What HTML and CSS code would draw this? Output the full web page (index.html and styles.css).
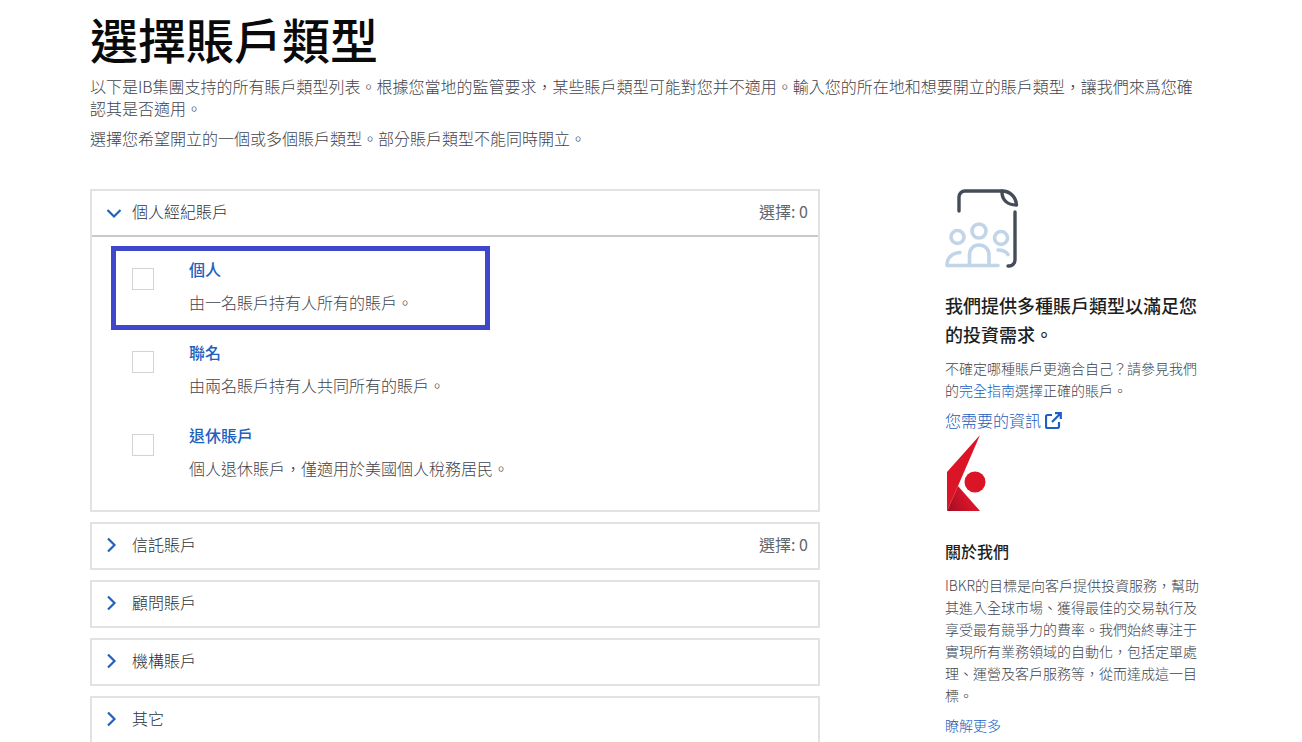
FILE: index.html
```html
<!DOCTYPE html>
<html lang="zh-Hant">
<head>
<meta charset="utf-8">
<title>選擇賬戶類型</title>
<link rel="stylesheet" href="styles.css">
</head>
<body>
<main class="page">
  <h1 class="title">選擇賬戶類型</h1>
  <p class="intro">以下是IB集團支持的所有賬戶類型列表。根據您當地的監管要求，某些賬戶類型可能對您并不適用。輸入您的所在地和想要開立的賬戶類型，讓我們來爲您確認其是否適用。</p>
  <p class="intro intro-second">選擇您希望開立的一個或多個賬戶類型。部分賬戶類型不能同時開立。</p>
  <div class="columns">
    <section class="accordion">
      <div class="panel">
        <div class="panel-head open">
          <svg class="chev" width="16" height="16" viewBox="0 0 16 16"><path d="M1.500 6 8 12.500 14.500 6" fill="none" stroke="#2460bd" stroke-width="2.200"/></svg>
          <span class="panel-name">個人經紀賬戶</span>
          <span class="count">選擇: 0</span>
        </div>
        <div class="options">
          <div class="option focus">
            <span class="check"></span>
            <div class="option-text"><a class="option-title">個人</a><div class="option-desc">由一名賬戶持有人所有的賬戶。</div></div>
          </div>
          <div class="option">
            <span class="check"></span>
            <div class="option-text"><a class="option-title">聯名</a><div class="option-desc">由兩名賬戶持有人共同所有的賬戶。</div></div>
          </div>
          <div class="option">
            <span class="check"></span>
            <div class="option-text"><a class="option-title">退休賬戶</a><div class="option-desc">個人退休賬戶，僅適用於美國個人稅務居民。</div></div>
          </div>
        </div>
      </div>
      <div class="panel">
        <div class="panel-head">
          <svg class="chev" width="16" height="16" viewBox="0 0 16 16"><path d="M2 1.500 8.500 8 2 14.500" fill="none" stroke="#2460bd" stroke-width="2.200"/></svg>
          <span class="panel-name">信託賬戶</span>
          <span class="count">選擇: 0</span>
        </div>
      </div>
      <div class="panel">
        <div class="panel-head">
          <svg class="chev" width="16" height="16" viewBox="0 0 16 16"><path d="M2 1.500 8.500 8 2 14.500" fill="none" stroke="#2460bd" stroke-width="2.200"/></svg>
          <span class="panel-name">顧問賬戶</span>
        </div>
      </div>
      <div class="panel">
        <div class="panel-head">
          <svg class="chev" width="16" height="16" viewBox="0 0 16 16"><path d="M2 1.500 8.500 8 2 14.500" fill="none" stroke="#2460bd" stroke-width="2.200"/></svg>
          <span class="panel-name">機構賬戶</span>
        </div>
      </div>
      <div class="panel">
        <div class="panel-head">
          <svg class="chev" width="16" height="16" viewBox="0 0 16 16"><path d="M2 1.500 8.500 8 2 14.500" fill="none" stroke="#2460bd" stroke-width="2.200"/></svg>
          <span class="panel-name">其它</span>
        </div>
      </div>
    </section>
    <aside class="side">
      <svg class="doc-icon" width="74" height="80" viewBox="0 0 74 80">
        <g fill="none" stroke="#454c59" stroke-width="3.400" stroke-linecap="round" stroke-linejoin="round">
          <path d="M14 22V8a6 6 0 0 1 6-6h37"/>
          <path d="M57 2c8 0 14 6 14.500 14-9 0-15-5-14.500-14z"/>
          <path d="M70 23v48a6 6 0 0 1-6 6h-1"/>
        </g>
        <g fill="none" stroke="#c2d4e8" stroke-width="3.600" stroke-linecap="round">
          <circle cx="12.500" cy="48" r="6.500"/>
          <circle cx="34" cy="42" r="7"/>
          <circle cx="56" cy="49" r="6.500"/>
          <path d="M2 76c0-7 5-12 13-12.500M24.500 76V66c0-6 4-10 9.500-10s10 4 10 10v10M53 61c4 0 8 1.500 10 4.500M2 76.500h51"/>
        </g>
      </svg>
      <h2 class="side-title">我們提供多種賬戶類型以滿足您的投資需求。</h2>
      <p class="side-text">不確定哪種賬戶更適合自己？請參見我們的<a class="inline-link">完全指南</a>選擇正確的賬戶。</p>
      <a class="info-link">您需要的資訊
        <svg width="17" height="17" viewBox="0 0 17 17"><path d="M7 3H2.500A1.500 1.500 0 0 0 1 4.500v10A1.500 1.500 0 0 0 2.500 16h10a1.500 1.500 0 0 0 1.500-1.500V10M10 1.200h5.800V7M15.500 1.500 7 10" fill="none" stroke="#1d5fc4" stroke-width="2.200"/></svg>
      </a>
      <svg class="logo" width="40" height="76" viewBox="0 0 40 76">
        <defs><linearGradient id="logo-dark" x1="0" y1="1" x2="1" y2="0.600"><stop offset="0" stop-color="#a00e22"/><stop offset="0.700" stop-color="#d8142a"/></linearGradient></defs>
        <path d="M33 0 0 37v39l11-25z" fill="#db1426"/>
        <path d="M0 76 11 51 33 76z" fill="url(#logo-dark)"/>
        <circle cx="28" cy="47" r="10.500" fill="#db1426"/>
      </svg>
      <h2 class="about-title">關於我們</h2>
      <p class="side-text about-text">IBKR的目標是向客戶提供投資服務，幫助其進入全球市場、獲得最佳的交易執行及享受最有競爭力的費率。我們始終專注于實現所有業務領域的自動化，包括定單處理、運營及客戶服務等，從而達成這一目標。</p>
      <a class="more-link">瞭解更多</a>
    </aside>
  </div>
</main>
</body>
</html>
```
FILE: styles.css
```css
* { box-sizing: border-box; }
html, body { margin: 0; height: 742px; overflow: hidden; background: #fff; }
body {
  font-family: "Noto Sans CJK TC", "Inter", "Liberation Sans", sans-serif;
  color: #3f444c;
}
.page { padding: 0 105px 0 90px; }
.title {
  margin: 0;
  padding-top: 7px;
  font-size: 48px;
  line-height: 62px;
  font-weight: 500;
  color: #0a0a0a;
}
.intro {
  margin: 6px 0 0;
  font-size: 16px;
  line-height: 22px;
  font-weight: 300;
}
.intro-second { margin-top: 8px; }
.columns { display: flex; margin-top: 40px; align-items: flex-start; }
.accordion { width: 730px; display: flex; flex-direction: column; gap: 10px; flex: none; }
.panel { border: 2px solid #e2e2e2; }
.panel-head {
  display: flex;
  align-items: center;
  height: 44px;
  padding: 0 10px 4px 14px;
  font-size: 16px;
  font-weight: 300;
  color: #2e3238;
}
.panel-head.open { height: 46px; border-bottom: 2px solid #c9c9c9; }
.chev { flex: none; margin-top: 2px; }
.panel-name { margin-left: 10px; flex: 1; }
.count { font-size: 16px; color: #5f6670; font-weight: 400; }
.options { padding: 9px 19px 15px; display: flex; flex-direction: column; }
.option {
  width: 379px;
  height: 83px;
  display: flex;
  padding: 6px 0 0 16px;
  border: 5px solid transparent;
  white-space: nowrap;
}
.option.focus { border-color: #3f48cc; height: 84px; margin-bottom: -1px; }
.check {
  width: 22px;
  height: 22px;
  margin-top: 11px;
  border: 1px solid #d3d3d0;
  flex: none;
}
.option-text { margin-left: 35px; }
.option-title {
  display: block;
  font-size: 16px;
  line-height: 24px;
  font-weight: 500;
  color: #2160bd;
}
.option-desc { margin-top: 9px; font-size: 16px; line-height: 24px; font-weight: 300; }
.side { width: 252px; margin-left: 125px; flex: none; }
.doc-icon { display: block; }
.side-title {
  margin: 22px 0 0;
  font-size: 18px;
  line-height: 29px;
  font-weight: 500;
  color: #1c1f24;
}
.side-text {
  margin: 8px 0 0;
  font-size: 14px;
  line-height: 22px;
  font-weight: 300;
}
.inline-link { color: #2160bd; }
.info-link {
  display: flex;
  align-items: center;
  gap: 4px;
  margin-top: 5px;
  height: 28px;
  font-size: 16px;
  font-weight: 300;
  color: #2160bd;
}
.logo { display: block; margin: 1px 0 0 2px; }
.about-title {
  margin: 28px 0 0;
  font-size: 16px;
  line-height: 24px;
  font-weight: 500;
  color: #1c1f24;
}
.about-text { margin: 11px -4px 0 0; }
.more-link {
  display: block;
  margin-top: 8px;
  font-size: 14px;
  line-height: 22px;
  font-weight: 300;
  color: #2160bd;
}
```
